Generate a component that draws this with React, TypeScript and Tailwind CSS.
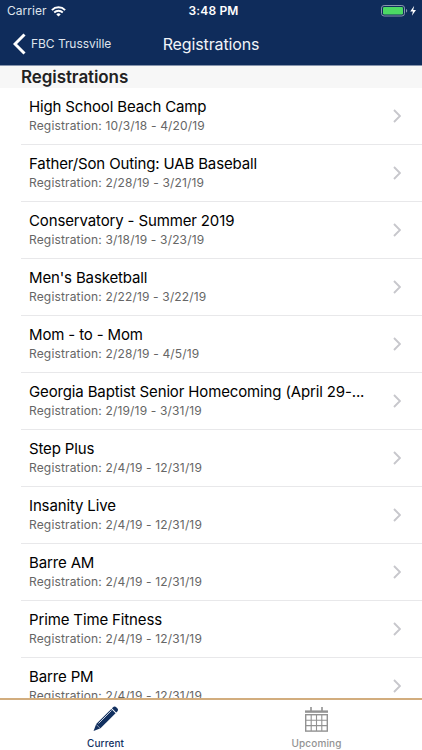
import React from 'react'

const registrations = [
  { name: 'High School Beach Camp', dates: '10/3/18 - 4/20/19' },
  { name: 'Father/Son Outing: UAB Baseball', dates: '2/28/19 - 3/21/19' },
  { name: 'Conservatory - Summer 2019', dates: '3/18/19 - 3/23/19' },
  { name: "Men's Basketball", dates: '2/22/19 - 3/22/19' },
  { name: 'Mom - to - Mom', dates: '2/28/19 - 4/5/19' },
  {
    name: 'Georgia Baptist Senior Homecoming (April 29-...',
    dates: '2/19/19 - 3/31/19',
  },
  { name: 'Step Plus', dates: '2/4/19 - 12/31/19' },
  { name: 'Insanity Live', dates: '2/4/19 - 12/31/19' },
  { name: 'Barre AM', dates: '2/4/19 - 12/31/19' },
  { name: 'Prime Time Fitness', dates: '2/4/19 - 12/31/19' },
  { name: 'Barre PM', dates: '2/4/19 - 12/31/19' },
]

const WifiIcon = () => (
  <svg width="15" height="11" viewBox="0 0 15 11" fill="none" stroke="white">
    <path d="M.9 4.100a9.300 9.300 0 0 1 13.200 0" strokeWidth="2" />
    <path d="M3.200 6.500a6.100 6.100 0 0 1 8.600 0" strokeWidth="1.800" />
    <path d="M7.500 10.600 5.300 8.400a3.100 3.100 0 0 1 4.400 0z" fill="white" stroke="none" />
  </svg>
)

const BatteryIcon = () => (
  <svg width="37" height="12" viewBox="0 0 37 12" fill="none">
    <rect x="0.5" y="0.5" width="23" height="10.5" rx="2.6" stroke="#8795ad" />
    <rect x="2" y="2" width="20" height="7.5" rx="1.2" fill="#4cd964" />
    <path d="M25 4v3.600c.9-.3 1.200-1 1.200-1.800S25.900 4.300 25 4z" fill="#8795ad" />
    <path d="M33.200 .8 29.200 6.500h2.700l-1 4.300 4.100-5.900h-2.800z" fill="white" />
  </svg>
)

const PencilIcon = () => (
  <svg width="26" height="26" viewBox="0 0 26 26">
    <path d="M.6 25 3.200 18 18.300 2.900l4.300 4.300L7.500 22.300z" fill="#12305f" />
    <path
      d="m18.900 2.300.9-.9a2.600 2.600 0 0 1 3.700 0l.6.600a2.600 2.600 0 0 1 0 3.700l-.9.900z"
      fill="#12305f"
    />
    <path d="M5.500 17.500 18.600 4.400" stroke="#dbe1ea" strokeWidth="0.900" />
    <path d="m3.100 18.300 4.200 4.200" stroke="white" strokeWidth="0.500" />
  </svg>
)

const CalendarIcon = () => (
  <svg width="23" height="25" viewBox="0 0 23 25" fill="none" stroke="#929292">
    <path d="M0 4.600h23" strokeWidth="2.400" />
    <path d="M6 0v4M17 0v4" strokeWidth="1.600" />
    <rect x="0.700" y="7.700" width="21.600" height="16.400" strokeWidth="1.400" />
    <path
      d="M6.200 8v16M11.500 8v16M16.800 8v16M1 13.200h21M1 18.600h21"
      strokeWidth="1.100"
    />
  </svg>
)

const App = () => {
  return (
    <div className="flex h-[750px] w-[422px] flex-col overflow-hidden bg-white font-['Inter','Liberation_Sans',sans-serif] text-black">
      <header className="h-[65.500px] shrink-0 border-b border-[#8795ad] bg-[#0f2c5b] text-white">
        <div className="grid h-[22px] grid-cols-3 items-center pr-[4px] pl-[7px] text-[12px]">
          <div className="flex items-center gap-[4px]">
            <span className="tracking-[0.050px] text-[#dfe4ec]">Carrier</span>
            <WifiIcon />
          </div>
          <span className="pl-[2px] text-center font-semibold tracking-[0.150px]">
            3:48 PM
          </span>
          <div className="flex justify-end">
            <BatteryIcon />
          </div>
        </div>
        <div className="grid h-[43px] grid-cols-[1fr_auto_1fr] items-center">
          <div className="flex items-center gap-[5px] pl-[13px]">
            <svg width="13" height="22" viewBox="0 0 13 22" fill="none">
              <path d="M11.500 1.500 2 11l9.500 9.500" stroke="white" strokeWidth="3" />
            </svg>
            <span className="text-[12px] tracking-[-0.050px] text-[#dfe4ec]">
              FBC Trussville
            </span>
          </div>
          <h1 className="text-[16px] tracking-[-0.130px] text-[#f1f4f8]">
            Registrations
          </h1>
        </div>
      </header>

      <h2 className="h-[22.500px] shrink-0 bg-[#f7f7f7] pl-[21px] text-[17px] leading-[23px] font-semibold tracking-[-0.080px] text-[#222]">
        Registrations
      </h2>

      <ul className="min-h-0 flex-1 overflow-hidden">
        {registrations.map((item) => (
          <li
            key={item.name}
            className="ml-[21px] flex h-[57px] items-center justify-between border-b border-[#e8e8ea] pr-[21px] pl-2"
          >
            <div className="pb-px whitespace-nowrap">
              <p className="text-[15px] leading-[20px] tracking-[-0.140px]">
                {item.name}
              </p>
              <p className="text-[12px] leading-[18px] tracking-[0.160px] text-[#666]">
                Registration: {item.dates}
              </p>
            </div>
            <svg width="8" height="14" viewBox="0 0 8 14" fill="none">
              <path d="m1 1 6 6-6 6" stroke="#c7c7cc" strokeWidth="1.900" />
            </svg>
          </li>
        ))}
      </ul>

      <nav className="grid h-[52px] shrink-0 grid-cols-2 border-t-2 border-[#d2ad7e] text-[10px] font-medium">
        <div className="flex flex-col items-center pt-[6px] text-[#12305f]">
          <PencilIcon />
          <span className="mt-[4px] leading-[14px] tracking-[0.100px]">Current</span>
        </div>
        <div className="flex flex-col items-center pt-[7px] text-[#929292]">
          <CalendarIcon />
          <span className="mt-[4px] leading-[14px] tracking-[0.150px]">Upcoming</span>
        </div>
      </nav>
    </div>
  )
}

export default App
